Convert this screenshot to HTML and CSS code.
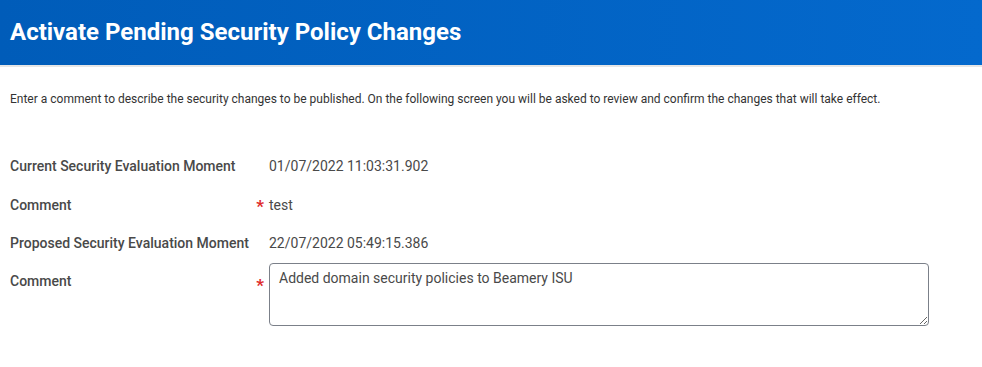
FILE: index.html
```html
<!DOCTYPE html>
<html lang="en">
  <head>
    <meta charset="UTF-8" />
    <meta name="viewport" content="width=device-width, initial-scale=1.0" />
    <title>Activate Pending Security Policy Changes</title>
    <link rel="stylesheet" href="styles.css">
  </head>
  <body>
    <div class="page-header">
      <h1>Activate Pending Security Policy Changes</h1>
    </div>

    <p class="intro">
      Enter a comment to describe the security changes to be published. On the following screen you will be asked to review and confirm the changes that will take effect.
    </p>

    <div class="form">
      <div class="form-row">
        <div class="label">Current Security Evaluation Moment</div>
        <div class="req"></div>
        <div class="value">01/07/2022 11:03:31.902</div>
      </div>
      <div class="form-row">
        <div class="label">Comment</div>
        <div class="req">*</div>
        <div class="value">test</div>
      </div>
      <div class="form-row">
        <div class="label">Proposed Security Evaluation Moment</div>
        <div class="req"></div>
        <div class="value">22/07/2022 05:49:15.386</div>
      </div>
      <div class="form-row top">
        <div class="label">Comment</div>
        <div class="req">*</div>
        <textarea class="comment-box">Added domain security policies to Beamery ISU</textarea>
      </div>
    </div>
  </body>
</html>
```

FILE: styles.css
```css
body {
  font-family: Roboto, "Liberation Sans", Arial, sans-serif;
  margin: 0;
  background-color: #fff;
  color: #333;
}
.page-header {
  height: 65px;
  background: linear-gradient(to right, #005cb9, #0469cd);
  border-bottom: 2px solid #e6e6e6;
  display: flex;
  align-items: center;
  padding: 0 10px;
}
.page-header h1 {
  margin: 0;
  color: #fff;
  font-size: 24px;
  font-weight: 700;
  padding-bottom: 2px;
}
.intro {
  font-size: 12px;
  color: #333;
  margin: 25px 10px 0;
}
.form {
  margin-top: 41px;
  padding: 0 10px;
}
.form-row {
  display: flex;
  align-items: center;
  height: 38.5px;
}
.form-row.top {
  align-items: flex-start;
  height: auto;
  padding-top: 0;
}
.label {
  width: 240px;
  font-size: 14px;
  font-weight: 500;
  color: #494949;
}
.form-row.top .label {
  margin-top: 10px;
}
.form-row.top .req {
  margin-top: 13px;
}
.req {
  width: 14px;
  padding-right: 5px;
  text-align: right;
  color: #de2b2b;
  font-size: 17px;
  font-weight: 700;
  line-height: 14px;
  padding-top: 2px;
}
.value {
  font-size: 14px;
  color: #494949;
}
.comment-box {
  width: 660px;
  height: 63px;
  box-sizing: border-box;
  border: 1px solid #7b8089;
  border-radius: 4px;
  padding: 6px 9px;
  font-family: inherit;
  font-size: 14px;
  color: #494949;
  margin: 0;
  resize: both;
}
```
